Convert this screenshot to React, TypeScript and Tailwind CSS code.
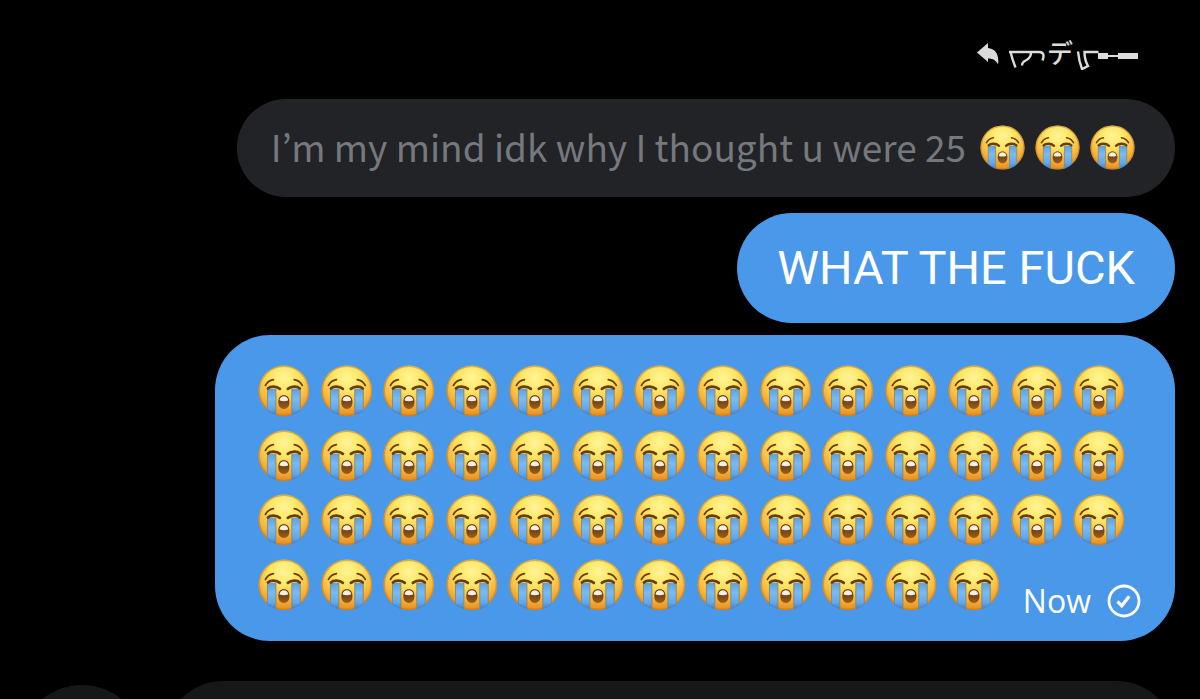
import type { ReactNode } from "react";

const CRY_COUNT = 54;

function CryDefs() {
  return (
    <svg width="0" height="0" className="absolute" aria-hidden="true">
      <defs>
        <radialGradient id="cry-face" cx="50%" cy="24%" r="78%">
          <stop offset="0" stopColor="#fff596" />
          <stop offset="0.36" stopColor="#fde562" />
          <stop offset="0.68" stopColor="#f8b93d" />
          <stop offset="1" stopColor="#e2871f" />
        </radialGradient>
        <linearGradient id="cry-tear" x1="0" y1="0" x2="0" y2="1">
          <stop offset="0" stopColor="#5f9fe2" />
          <stop offset="0.35" stopColor="#78bbf5" />
          <stop offset="0.7" stopColor="#62a8ee" />
          <stop offset="1" stopColor="#3578cf" />
        </linearGradient>
        <linearGradient id="cry-mouth" x1="0" y1="0" x2="0" y2="1">
          <stop offset="0" stopColor="#5b2c0b" />
          <stop offset="1" stopColor="#9a5f1c" />
        </linearGradient>
        <clipPath id="cry-clip">
          <circle cx="26" cy="26" r="25.5" />
        </clipPath>
      </defs>
    </svg>
  );
}

function CryFace({ className }: { className: string }) {
  return (
    <svg viewBox="0 0 52 52" role="img" aria-label="😭" className={className}>
      <circle cx="26" cy="26" r="25.5" fill="url(#cry-face)" />
      <circle cx="26" cy="26" r="24.8" fill="none" stroke="#b8741f" strokeOpacity="0.5" strokeWidth="1.4" />
      <g clipPath="url(#cry-clip)">
        <path d="M9.5 24H18v28H9.5z" fill="url(#cry-tear)" />
        <path d="M34 24h8.5v28H34z" fill="url(#cry-tear)" />
        <path
          d="M9.5 24v28M18 24v28M34 24v28M42.5 24v28"
          stroke="#8a8a5e"
          strokeWidth="0.9"
          fill="none"
        />
        <path
          d="M9 45.500q4.500 4 9 5.500M43 45.500q-4.500 4-9 5.500"
          stroke="#2c66b5"
          strokeWidth="1.2"
          fill="none"
        />
      </g>
      <g fill="none" stroke="#6b3d0c" strokeLinecap="round">
        <path d="M7.5 20.5C9 17.7 12 15.5 15.5 14.8" strokeWidth="1.8" />
        <path d="M44.5 20.5C43 17.7 40 15.5 36.5 14.8" strokeWidth="1.8" />
        <path d="M10 23.6C12.500 21 18.500 21 22 24" strokeWidth="2.7" />
        <path d="M42 23.6C39.500 21 33.500 21 30 24" strokeWidth="2.7" />
      </g>
      <path
        d="M26 30.5c3.6 0 5.6 2.6 5.6 6.8 0 4.500-2.100 6.900-5.600 6.900s-5.600-2.400-5.600-6.900c0-4.200 2-6.800 5.600-6.800z"
        fill="url(#cry-mouth)"
      />
      <path
        d="M26 31.500c2.400 0 3.900 1.400 4.400 3.800-.3.800-1.100 1.100-4.400 1.100s-4.100-.3-4.400-1.100c.5-2.400 2-3.800 4.400-3.800z"
        fill="#f4f0e8"
      />
    </svg>
  );
}

function ReplyIcon() {
  return (
    <svg viewBox="0 0 22 22" className="w-[22px] h-[22px]" aria-hidden="true">
      <path
        d="M0 9.5 11 0v5C18.5 5.6 22.500 12 21 21.500c-1.800-3.900-4.800-6-10-6V19z"
        fill="#dcdcdc"
      />
    </svg>
  );
}

function SentIcon() {
  return (
    <svg viewBox="0 0 34 34" className="w-[34px] h-[34px]" role="img" aria-label="Sent">
      <circle cx="17" cy="17" r="15" fill="none" stroke="#fff" strokeWidth="2.8" />
      <path d="M10.5 17.5l4.3 4.3 7.4-9.6" fill="none" stroke="#fff" strokeWidth="3.2" />
    </svg>
  );
}

function ReplyHandle() {
  return (
    <div className="flex items-center text-[#dcdcdc]">
      <svg viewBox="0 0 39 32" className="w-[39px] h-8" aria-hidden="true">
        <path
          d="M1 14h30q4.5 0 4.500 4 0 2-1 4.500M2.500 14q2 8 5 15.500M23 14.5q0 5-4.500 7.500-4.500 2-4.500 5.500"
          fill="none"
          stroke="currentColor"
          strokeWidth="2.4"
        />
      </svg>
      <span className="-mt-1 text-[26px] leading-8 font-['Noto_Sans_CJK_JP',sans-serif] font-medium">デ</span>
      <svg viewBox="0 0 66 32" className="w-[66px] h-8" aria-hidden="true">
        <path
          d="M5 13.500q1 10 4 17.500l6-3q-3.500-6-3.500-14h14"
          fill="none"
          stroke="currentColor"
          strokeWidth="2.4"
        />
        <path d="M25 15h10v2h10v-2h20v6H45v-2H35v2H25z" fill="currentColor" />
      </svg>
    </div>
  );
}

function Bubble({ className, children }: { className: string; children: ReactNode }) {
  return <div className={`max-w-full ${className}`}>{children}</div>;
}

export default function App() {
  return (
    <main className="flex h-screen flex-col overflow-hidden bg-black px-[25px] pt-[38px]">
      <CryDefs />
      <section className="flex flex-col items-end">
        <div className="mb-[29px] mr-9 flex h-8 items-center gap-[9px]">
          <ReplyIcon />
          <ReplyHandle />
        </div>

        <Bubble className="mb-4 flex items-center gap-[14px] rounded-[49px] bg-[#212327] pb-[27px] pl-[34px] pr-10 pt-[22px]">
          <p className="whitespace-nowrap text-[37px] leading-[48px] text-[#75787d] font-['Noto_Sans_CJK_JP',sans-serif]">
            I’m my mind idk why I thought u were 25
          </p>
          <span className="mt-1 flex gap-[10px]">
            <CryFace className="size-[45px]" />
            <CryFace className="size-[45px]" />
            <CryFace className="size-[45px]" />
          </span>
        </Bubble>

        <Bubble className="mb-3 rounded-[55px] bg-[#4a98e9] px-10 py-[27px]">
          <p className="whitespace-nowrap text-[47px] leading-[56px] text-white font-['Roboto',sans-serif]">
            WHAT THE FUCK
          </p>
        </Bubble>

        <Bubble className="w-[960px] rounded-[55px] bg-[#4a98e9] px-[43px] py-[30px]">
          <div className="mr-[7px] grid grid-cols-14 gap-x-[11px] gap-y-[13px]">
            {Array.from({ length: CRY_COUNT }, (_, i) => (
              <CryFace key={i} className="w-full" />
            ))}
            <div className="col-span-2 -mb-2 -mr-4 flex h-9 items-center justify-end gap-4 self-end">
              <time className="text-[32px] leading-9 text-white font-['Open_Sans',sans-serif]">Now</time>
              <SentIcon />
            </div>
          </div>
        </Bubble>
      </section>

      <footer className="mt-10 flex shrink-0 items-start gap-5">
        <div className="-ml-1.5 mt-1 size-[126px] shrink-0 rounded-full bg-[#161719]" />
        <div className="h-[116px] flex-1 rounded-[58px] bg-[#161719]" />
      </footer>
    </main>
  );
}
